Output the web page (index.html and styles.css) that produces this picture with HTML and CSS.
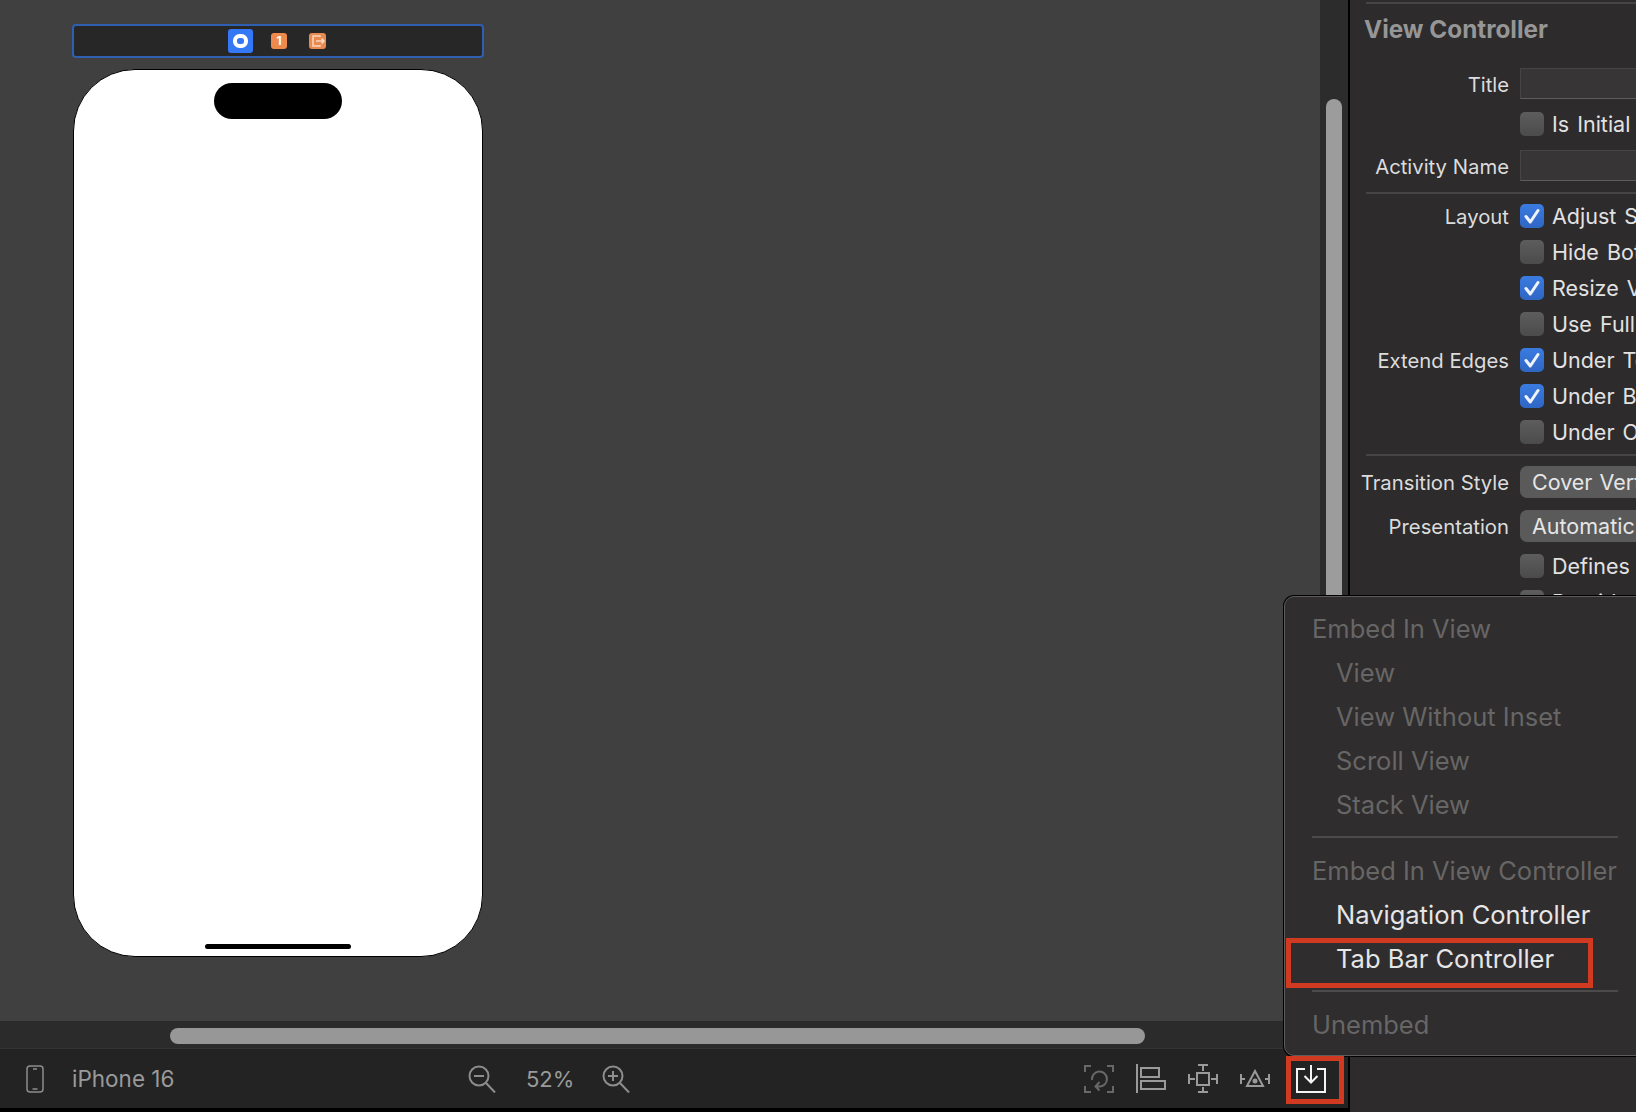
FILE: index.html
```html
<!DOCTYPE html>
<html lang="en">
<head>
<meta charset="utf-8">
<title>Xcode Storyboard</title>
<link rel="stylesheet" href="styles.css">
</head>
<body>
<svg class="defs" width="0" height="0"><symbol id="tick" viewBox="0 0 24 24"><path d="M6 12.500l4.300 5.500L18 6.500" fill="none" stroke="#eef3fd" stroke-width="3" stroke-linecap="round" stroke-linejoin="round"/></symbol></svg>
<div class="app">
  <div class="main">
    <div class="upper">
      <div class="canvas">
        <div class="scene-bar">
          <span class="vc-icon"><span class="vc-ring"></span></span>
          <span class="fr-icon">1</span>
          <span class="ex-icon"><svg width="17" height="16" viewBox="0 0 17 16"><path d="M11 4V3H4v10h7v-1M7 8h8M12.500 5.500L15 8l-2.500 2.500" fill="none" stroke="#fbd9c2" stroke-width="1.500"/></svg></span>
        </div>
        <div class="phone">
          <div class="notch"></div>
          <div class="home"></div>
        </div>
      </div>
      <div class="vstrip"><div class="vthumb"></div></div>
    </div>
    <div class="hstrip"><div class="hthumb"></div></div>
    <div class="toolbar">
      <svg class="ic-phone" width="18" height="28" viewBox="0 0 18 28"><rect x="1" y="1" width="16" height="26" rx="3" fill="none" stroke="#8d8d8d" stroke-width="1.500"/><path d="M7 4h4M6.500 24h5" stroke="#8d8d8d" stroke-width="1.500"/></svg>
      <span class="device">iPhone 16</span>
      <svg class="ic-zoom-out" width="28" height="28" viewBox="0 0 28 28"><circle cx="11" cy="11" r="9.500" fill="none" stroke="#8d8d8d" stroke-width="2"/><path d="M18 18l9 9.500M6 11h10" stroke="#8d8d8d" stroke-width="2"/></svg>
      <span class="zoom-val">52%</span>
      <svg class="ic-zoom-in" width="28" height="28" viewBox="0 0 28 28"><circle cx="11" cy="11" r="9.500" fill="none" stroke="#8d8d8d" stroke-width="2"/><path d="M18 18l9 9.500M6 11h10M11 6v10" stroke="#8d8d8d" stroke-width="2"/></svg>
      <svg class="ic-refresh" width="30" height="28" viewBox="0 0 30 28"><path d="M1 7V1h6M23 1h6v6M29 21v6h-6M7 27H1v-6" fill="none" stroke="#686868" stroke-width="2"/><path d="M8 15a7.500 7.500 0 1 1 7 6.500h-3M15.500 17l-4 4.500 4 4" fill="none" stroke="#686868" stroke-width="2"/></svg>
      <svg class="ic-align" width="30" height="29" viewBox="0 0 30 29"><path d="M1 0v29" stroke="#9a9a9a" stroke-width="2"/><rect x="5" y="4" width="18" height="9" fill="none" stroke="#9a9a9a" stroke-width="2"/><rect x="5" y="17" width="24" height="8" fill="none" stroke="#9a9a9a" stroke-width="2"/></svg>
      <svg class="ic-pin" width="30" height="29" viewBox="0 0 30 29"><rect x="9" y="9" width="12" height="12" fill="none" stroke="#9a9a9a" stroke-width="2"/><path d="M10 1h10M15 1v6M10 28h10M15 28v-5M1 10v10M1 15h6M29 10v10M29 15h-6" fill="none" stroke="#9a9a9a" stroke-width="2"/></svg>
      <svg class="ic-tri" width="30" height="20" viewBox="0 0 30 20"><path d="M15 2l8 15H7zM1 5v10M1 10h4M29 5v10M29 10h-4" fill="none" stroke="#9a9a9a" stroke-width="2"/><circle cx="15" cy="12" r="2.500" fill="#9a9a9a"/></svg>
      <svg class="ic-embed" width="30" height="28" viewBox="0 0 30 28"><path d="M9 4H1v23h28V4h-8" fill="none" stroke="#f4f4f4" stroke-width="2"/><path d="M15 0v17M8.500 11l6.500 6.500 6.500-6.500" fill="none" stroke="#f4f4f4" stroke-width="2"/></svg>
    </div>
    <div class="blackfoot"></div>
  </div>
  <div class="divider"></div>
  <div class="inspector">
    <div class="sep sep-top"></div>
    <div class="insp-title">View Controller</div>
    <div class="row row-field"><span class="lbl">Title</span><span class="field"></span></div>
    <div class="row row-cb"><span class="lbl"></span><span class="cb"></span><span class="txt">Is Initial View Controller</span></div>
    <div class="row row-field row-name"><span class="lbl">Activity Name</span><span class="field"></span></div>
    <div class="sep sep-a"></div>
    <div class="row row-cb"><span class="lbl">Layout</span><span class="cb on"><svg width="24" height="24"><use href="#tick"/></svg></span><span class="txt">Adjust Scroll View Insets</span></div>
    <div class="row row-cb"><span class="lbl"></span><span class="cb"></span><span class="txt">Hide Bottom Bar on Push</span></div>
    <div class="row row-cb"><span class="lbl"></span><span class="cb on"><svg width="24" height="24"><use href="#tick"/></svg></span><span class="txt">Resize View From NIB</span></div>
    <div class="row row-cb"><span class="lbl"></span><span class="cb"></span><span class="txt">Use Full Screen</span></div>
    <div class="row row-cb"><span class="lbl">Extend Edges</span><span class="cb on"><svg width="24" height="24"><use href="#tick"/></svg></span><span class="txt">Under Top Bars</span></div>
    <div class="row row-cb"><span class="lbl"></span><span class="cb on"><svg width="24" height="24"><use href="#tick"/></svg></span><span class="txt">Under Bottom Bars</span></div>
    <div class="row row-cb"><span class="lbl"></span><span class="cb"></span><span class="txt">Under Opaque Bars</span></div>
    <div class="sep sep-b"></div>
    <div class="row row-btn"><span class="lbl">Transition Style</span><span class="pop">Cover Vertical</span></div>
    <div class="row row-btn"><span class="lbl">Presentation</span><span class="pop">Automatic</span></div>
    <div class="row row-cb row-after"><span class="lbl"></span><span class="cb"></span><span class="txt">Defines Context</span></div>
    <div class="row row-cb"><span class="lbl"></span><span class="cb"></span><span class="txt">Provides Context</span></div>
  </div>
  <div class="menu">
    <div class="mi head">Embed In View</div>
    <div class="mi sub dim">View</div>
    <div class="mi sub dim">View Without Inset</div>
    <div class="mi sub dim">Scroll View</div>
    <div class="mi sub dim">Stack View</div>
    <div class="msep msep-a"></div>
    <div class="mi head">Embed In View Controller</div>
    <div class="mi sub">Navigation Controller</div>
    <div class="mi sub">Tab Bar Controller</div>
    <div class="msep msep-b"></div>
    <div class="mi head">Unembed</div>
  </div>
  <div class="mark mark-tab"></div>
  <div class="mark mark-embed"></div>
</div>
</body>
</html>
```
FILE: styles.css
```css
* { box-sizing: border-box; }
html, body { margin: 0; padding: 0; }
body { width: 1636px; height: 1112px; overflow: hidden; background: #2d2b2c; font-family: Inter, "Liberation Sans", sans-serif; }
.defs { position: absolute; }
.app { position: relative; display: flex; width: 1636px; height: 1112px; overflow: hidden; }
.main { width: 1348px; height: 1112px; display: flex; flex-direction: column; flex: none; }
.upper { flex: 1; display: flex; min-height: 0; }
.canvas { flex: 1; background: #404040; padding: 24px 0 0 72px; }
.scene-bar { width: 412px; height: 34px; background: #272727; border: 2px solid #2f5fb0; border-radius: 4px; margin-bottom: 11px; display: flex; align-items: center; padding-left: 154px; }
.vc-icon { width: 25px; height: 24px; background: #3478f6; border-radius: 3px; display: flex; align-items: center; justify-content: center; margin-right: 18px; flex: none; }
.vc-ring { width: 15px; height: 14px; border: 4px solid #fff; border-radius: 6.500px; }
.fr-icon { width: 16px; height: 16px; background: #ee8a4c; border-radius: 3px; color: #fff; font-size: 12px; font-weight: 700; line-height: 16px; text-align: center; margin-right: 22px; flex: none; }
.ex-icon { width: 17px; height: 16px; background: #e98a4e; border-radius: 3px; flex: none; display: block; }
.ex-icon svg { display: block; }
.phone { width: 410px; height: 888px; margin-left: 1px; background: #fff; border: 1.500px solid #000; border-radius: 62px; display: flex; flex-direction: column; align-items: center; padding: 13px 0 7px; }
.notch { width: 128px; height: 36px; background: #000; border-radius: 18px; }
.home { width: 146px; height: 5px; background: #000; border-radius: 3px; margin-top: auto; }
.vstrip { width: 28px; background: #2c2c2c; padding: 99px 6px 0 6px; }
.vthumb { width: 16px; height: 560px; background: #9c9c9c; border-radius: 8px; }
.hstrip { height: 28px; background: #2b2b2b; padding: 7px 0 0 170px; border-bottom: 1px solid #333; }
.hthumb { width: 975px; height: 16px; background: #979797; border-radius: 8px; }
.toolbar { height: 59px; background: #232323; display: flex; align-items: center; padding-left: 26px; }
.toolbar svg { flex: none; display: block; }
.device { color: #9a9a9a; font-size: 22.500px; margin-left: 28px; width: 101px; white-space: nowrap; }
.ic-zoom-out { margin-left: 295px; }
.zoom-val { color: #9a9a9a; font-size: 22px; margin-left: 30px; width: 45px; white-space: nowrap; }
.ic-zoom-in { margin-left: 31px; }
.ic-refresh { margin-left: 454px; }
.ic-align { margin-left: 22px; }
.ic-pin { margin-left: 22px; }
.ic-tri { margin-left: 22px; }
.ic-embed { margin-left: 26px; }
.blackfoot { height: 4px; background: #000; }
.divider { width: 2px; background: #000; flex: none; }
.inspector { flex: 1; min-width: 0; background: #2d2b2c; color: #dcdcdc; font-size: 20.300px; overflow: hidden; }
.sep { height: 2px; background: #454545; margin-left: 16px; }
.sep-top { margin-top: 2px; }
.sep-a { margin-top: 11px; margin-bottom: 4px; }
.sep-b { margin-top: 4px; margin-bottom: 10px; }
.insp-title { font-size: 24.300px; font-weight: 700; color: #969696; height: 64px; padding: 9px 0 0 14px; line-height: 32px; white-space: nowrap; }
.row { display: flex; align-items: center; white-space: nowrap; }
.row-field { height: 31px; }
.row-cb { height: 36px; }
.row-field + .row-cb { margin-top: 7px; }
.row-name { margin-top: 8px; }
.row-btn { height: 32px; margin-bottom: 12px; }
.row-after { margin-top: -6px; }
.row-field .lbl { padding-top: 2px; }
.lbl { width: 159px; flex: none; text-align: right; margin-right: 11px; }
.field { width: 200px; height: 31px; background: #373536; border: 1px solid #454545; border-bottom-color: #5d5d5d; flex: none; }
.cb { width: 24px; height: 24px; flex: none; border-radius: 5px; background: linear-gradient(#5d5d5d, #4b4b4b); margin-right: 8px; }
.cb svg { display: block; }
.cb.on { background: linear-gradient(#3b7be0, #2f66c4); }
.txt { color: #e2e2e2; font-size: 21.500px; word-spacing: 2px; }
.pop { width: 200px; height: 32px; background: #5a5a5a; border-radius: 7px; padding-left: 12px; line-height: 32px; color: #e6e6e6; font-size: 21.500px; word-spacing: 1px; flex: none; }
.menu { position: absolute; left: 1284px; top: 596px; width: 380px; height: 460px; padding-top: 10px; background: #2f2d2d; border: 1px solid #5c5c5c; border-radius: 10px; box-shadow: 0 0 0 1px #000; font-size: 25.500px; }
.mi { height: 44px; line-height: 44px; white-space: nowrap; }
.head { padding-left: 27px; color: #676666; }
.sub { padding-left: 51px; color: #e6e6e6; }
.sub.dim { color: #676666; }
.msep { height: 2px; width: 306px; margin-left: 27px; background: #4c4b4b; }
.msep-a { margin-top: 9px; margin-bottom: 11px; }
.msep-b { margin-top: 9px; margin-bottom: 11px; }
.mark { position: absolute; border: 5px solid #cf3a21; }
.mark-tab { left: 1286px; top: 938px; width: 307px; height: 50px; }
.mark-embed { left: 1286px; top: 1056px; width: 58px; height: 48px; }
```
